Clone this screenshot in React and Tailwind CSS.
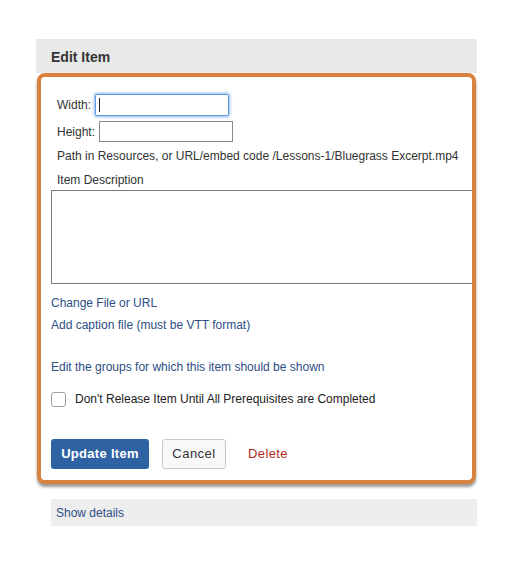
export default function App() {
  const font = { fontFamily: '"Liberation Sans", Arial, sans-serif' };
  return (
    <div className="w-[523px] h-[575px] bg-white" style={font}>
      <div className="pt-[39px] pl-[36px] w-[477px]">
        <div className="h-[34px] bg-[#e9e9e9] pl-[15px] pt-[10px]">
          <div className="text-[14px] leading-[16px] font-bold text-[#333]">Edit Item</div>
        </div>
        <div className="ml-[1px] w-[439px] border-[4px] border-[#d9823f] rounded-[8px] bg-white overflow-hidden shadow-[0_3px_3px_rgba(0,0,0,0.4)] pl-[10px] pt-[17px] pb-[11px] text-[12px] text-[#333]">
          <div className="flex items-center h-[22px] pl-[6px]">
            <span className="leading-[16px]">Width:</span>
            <div className="ml-[4px] w-[134px] h-[22px] border border-[#5b9ae0] rounded-[2px] shadow-[0_0_3px_1px_rgba(90,150,230,0.7)] flex items-center pl-[3px]">
              <div className="w-[1px] h-[14px] bg-[#222]"></div>
            </div>
          </div>
          <div className="flex items-center h-[21px] mt-[5px] pl-[6px]">
            <span className="leading-[16px]">Height:</span>
            <div className="ml-[4px] w-[134px] h-[21px] border border-[#8a8a8a]"></div>
          </div>
          <div className="mt-[6px] leading-[16px] pl-[6px]">
            Path in Resources, or URL/embed code /Lessons-1/Bluegrass Excerpt.mp4
          </div>
          <div className="mt-[8px] leading-[16px] pl-[6px]">Item Description</div>
          <div className="mt-[2px] w-[440px] h-[94px] border border-[#7a7a7a] shrink-0"></div>
          <div className="mt-[11px] leading-[16px] text-[#2d4d84]">Change File or URL</div>
          <div className="mt-[6px] leading-[16px] text-[#2d4d84]">Add caption file (must be VTT format)</div>
          <div className="mt-[26px] leading-[16px] text-[#2d4d84]">Edit the groups for which this item should be shown</div>
          <div className="mt-[16px] flex items-center h-[16px]">
            <div className="w-[15px] h-[15px] border border-[#a0a0a0] rounded-[3px] bg-white"></div>
            <span className="ml-[9px] leading-[16px] text-[#222]">Don't Release Item Until All Prerequisites are Completed</span>
          </div>
          <div className="mt-[32px] flex items-center h-[30px]">
            <div className="w-[98px] h-[30px] bg-[#2f62a3] rounded-[3px] flex items-center justify-center text-white font-bold text-[13px] tracking-[0.3px]">
              Update Item
            </div>
            <div className="ml-[13px] w-[64px] h-[30px] bg-[#f8f8f8] border border-[#c8c8c8] rounded-[3px] flex items-center justify-center text-[13px] text-[#333] tracking-[0.5px]">
              Cancel
            </div>
            <div className="ml-[22px] text-[13px] text-[#b42a22] tracking-[0.4px]">Delete</div>
          </div>
        </div>
        <div className="ml-[15px] mt-[15px] h-[27px] bg-[#eeeeee] pl-[5px] flex items-center">
          <span className="text-[12px] text-[#2d4d84] leading-[16px]">Show details</span>
        </div>
      </div>
    </div>
  );
}
